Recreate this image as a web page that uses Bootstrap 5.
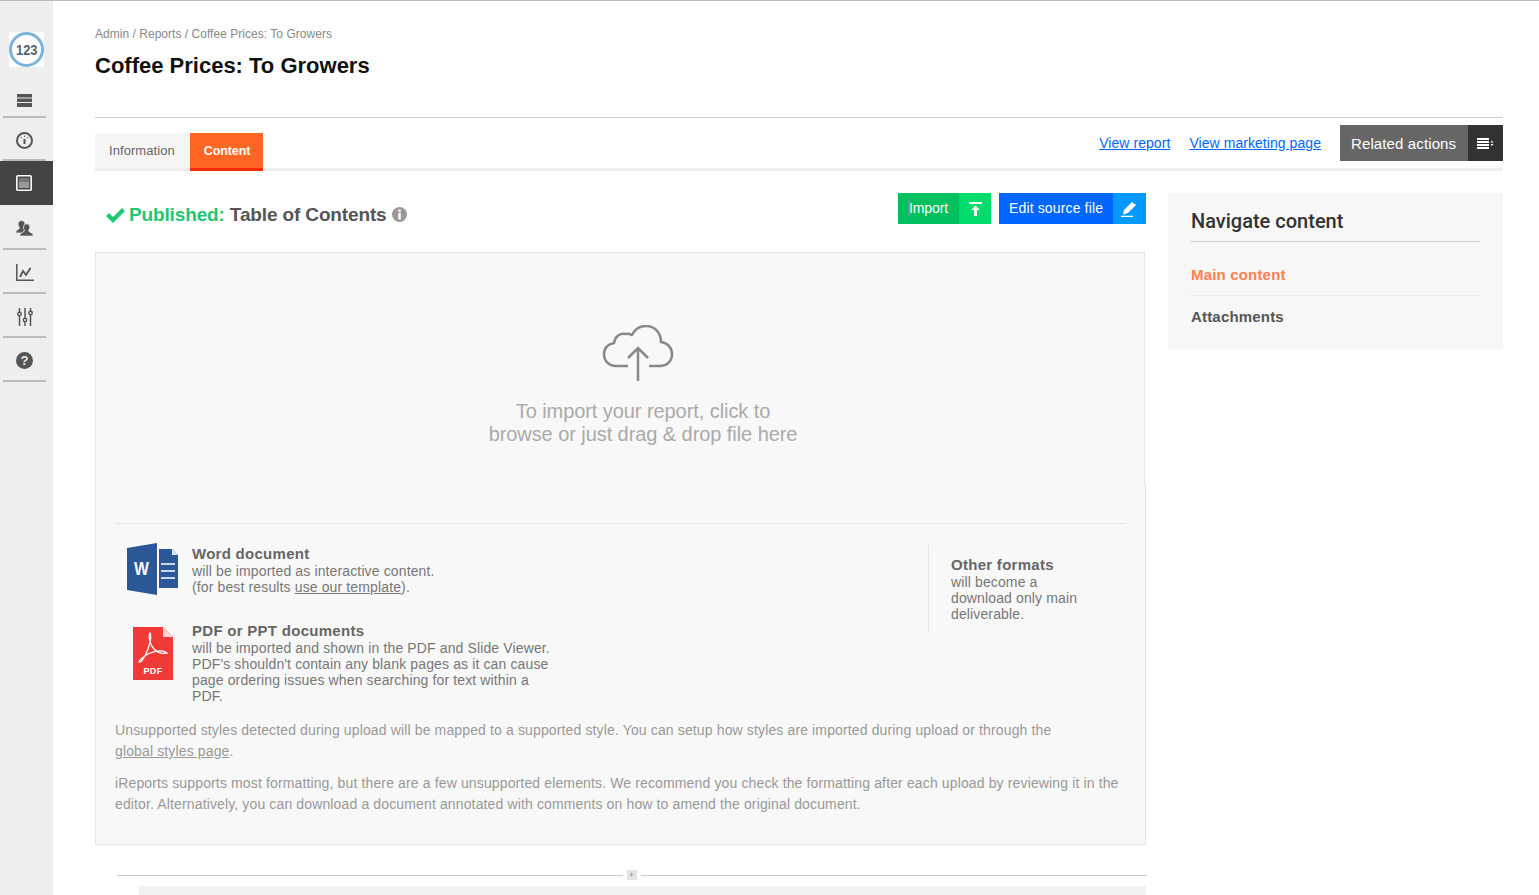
<!DOCTYPE html>
<html lang="en">
<head>
<meta charset="utf-8">
<title>Coffee Prices: To Growers</title>
<link href="https://cdn.jsdelivr.net/npm/bootstrap@5.3.0/dist/css/bootstrap.min.css" rel="stylesheet">
<style>
html,body{height:100%;overflow:hidden}
body{font-family:"Liberation Sans",Arial,sans-serif;font-size:14px;color:#777;background:#fff}
.shell{height:895px;border-top:1px solid #bbb}
.side{width:53px;flex:none;background:#eee}
.side-logo{height:78px;padding:31px 0 0 9px}
.side-item{height:44px;margin:0 7px 0 3px;padding-top:3px;border-bottom:2px solid #bbb;display:flex;align-items:center;justify-content:center;color:#555}
.side-item.i1{height:39px;padding-top:6px}
.side-item.i2{height:43px}
.side-active{height:44px;background:#444;display:flex;align-items:center;justify-content:center;padding-right:5px}
.side-item.i4{height:45px}
.main{flex:1;min-width:0;padding:0 36px 0 42px}
.crumb{font-size:12px;color:#888;line-height:14px;padding-top:26px;letter-spacing:.03px}
.ttl{font-size:22px;font-weight:700;color:#111;line-height:26px;margin:12px 0 0}
.rule1{height:1px;background:#ccc;margin-top:38px}
.tabbar{height:53px;border-bottom:3px solid #eee;align-items:flex-end}
.tb{height:35px;line-height:36px;font-size:13px;padding:0 15px 0 14px;background:#f5f5f5;color:#666;text-decoration:none;display:block;letter-spacing:.07px}
.tb.on{background:#ff6624;color:#fff;font-weight:700;font-size:12.5px;height:38px;padding:0 13px 0 14px;border-bottom:3px solid #ff2a00;margin-bottom:-3px;box-shadow:1px 0 0 #fff;letter-spacing:-.1px}
.tb-right{height:36px;margin-top:7px}
.lnk{color:#06f;font-size:14px;text-decoration:underline;margin-right:19px;line-height:16px;letter-spacing:.06px}
.rel{height:36px;display:flex;color:#fff;font-size:15px;line-height:38px;text-decoration:none;letter-spacing:.12px}
.rel b{font-weight:400;background:#666;padding:0 11px;width:128px}
.rel i{width:35px;background:#333;display:flex;align-items:center;justify-content:center}
.cols{margin-top:22px;gap:22px}
.left{width:1051px;flex:none}
.right{width:335px;flex:none;height:156px;background:#f7f7f7;padding:15px 23px 0 23px}
.pubrow{height:59px}
.pubhead{font-size:19px;font-weight:700;color:#555;padding:8px 0 0 11px;line-height:28px;letter-spacing:-.14px}
.pubhead span{color:#1ec774}
.infoi{vertical-align:-1px}
.actb{height:31px;display:flex;color:#fff;font-size:14px;line-height:30px;text-decoration:none;letter-spacing:-.1px}
.actb b{font-weight:400;padding:0 10px;white-space:nowrap}
.actb i{display:flex;align-items:center;justify-content:center;width:33px}
.gr b{background:#00c060;width:61px;position:relative;padding-left:11px}
.gr b::before{content:"";position:absolute;left:10px;top:7px;width:2px;height:16px;background:#5f9f7f}
.gr i{background:#00dc6c;width:32px}
.bl{margin-left:8px;letter-spacing:.14px}
.bl b{background:#06f;width:114px}
.bl i{background:#09f}
.zone{width:1050px;height:232px;background:#f8f8f8;border:1px solid #e5e5e5;border-bottom:0;text-align:center;color:#aaa;font-size:20px;line-height:23px;padding:72px 0 0 46px;letter-spacing:-.07px}
.zone svg{display:block;margin:0 0 18px 460px}
.zone p{margin:0}
.info{height:361px;background:#f8f8f8;border:1px solid #e5e5e5;border-top:0;padding:39px 19px 0 19px}
.sep{height:1px;background:#e8e8e8}
.docs{height:188px}
.doc{display:flex;line-height:16px;letter-spacing:.13px}
.doc h6,.other h6{font-size:15px;font-weight:700;color:#666;margin:0;line-height:18px;letter-spacing:.28px}
.doc-w{padding-top:21px}
.doc-p{padding-top:27px}
.ic{width:77px;flex:none}
.ic-w{display:block;margin:-2px 0 0 12px}
.ic-p{display:block;margin:5px 0 0 18px}
.ptext{width:362px}
.docl{width:813px;flex:none}
.other{width:198px;border-left:1px solid #e5e5e5;height:88px;margin-top:21px;padding:11px 0 0 22px;line-height:16px;letter-spacing:.13px}
.doc a,.info a{color:#777}
.note{color:#999;line-height:21px;margin:0 0 11px;letter-spacing:.135px}
.note-first{margin-top:8px}
.note a{color:#999}
.foot{height:20px;margin:20px 0 0 22px;gap:4px}
.foot em{flex:1;height:1px;background:#ccc}
.foot u{width:10px;height:10px;background:#e4e4e4;display:flex;align-items:center;justify-content:center;font-size:9px;line-height:10px;color:#999;text-decoration:none}
.grayblk{height:20px;background:#f2f2f2;margin:1px 0 0 44px}
.right h5{font-size:20px;font-weight:500;color:#333;line-height:26px;margin:0;padding-bottom:7px;border-bottom:1px solid #ccc;font-family:Roboto,"Liberation Sans",sans-serif}
.nv{display:block;font-size:15px;font-weight:700;text-decoration:none;line-height:20px;letter-spacing:.18px}
.nv.a{color:#ff7f50;padding:23px 0 10px;border-bottom:1px solid #eee}
.nv.b{color:#555;padding:11px 0 0}
</style>
</head>
<body>
<div class="shell d-flex">
  <nav class="side d-flex flex-column">
    <div class="side-logo">
      <svg width="35" height="35" viewBox="0 0 35 35"><rect width="35" height="35" fill="#fff"/><circle cx="17.5" cy="17.5" r="16" fill="#fff" stroke="#7ab3dc" stroke-width="3"/><text x="7" y="23" font-family="Liberation Sans,sans-serif" font-size="15" font-weight="700" fill="#55646f" textLength="21.500" lengthAdjust="spacingAndGlyphs">123</text></svg>
    </div>
    <div class="side-item i1"><svg width="15" height="13" viewBox="0 0 15 13" fill="#555"><rect width="15" height="3.500"/><rect y="4.500" width="15" height="3.500"/><rect y="9" width="15" height="4"/></svg></div>
    <div class="side-item i2"><svg width="17" height="17" viewBox="0 0 17 17" fill="none" stroke="#555"><circle cx="8.500" cy="8.500" r="7.500" stroke-width="2"/><path d="M8.500 7v5" stroke-width="2"/><path d="M8.500 3.500v1.500M5 5l.6 1.200M12 5l-.6 1.200" stroke-width="1"/></svg></div>
    <div class="side-active"><svg width="16" height="16" viewBox="0 0 16 16"><rect x=".8" y=".8" width="14.400" height="14.400" rx="1" fill="#444" stroke="#fff" stroke-width="1.600"/><rect x="2.800" y="3" width="10.400" height="4" fill="#777"/><rect x="2.800" y="7" width="10.400" height="6" fill="#999"/></svg></div>
    <div class="side-item i4"><svg width="17" height="16" viewBox="0 0 17 16" fill="#555" stroke="#eee" stroke-width=".7"><path d="M2 4a3.500 3.500 0 1 1 7 0c0 1.200-.5 2.400-1.200 3.200v1.300L10 10l-4 3H0v-2l3.300-2.500V7.200C2.500 6.400 2 5.200 2 4z"/><path d="M7.500 7a3.200 3.200 0 1 1 6.400 0c0 1.400-.5 2.400-1.200 3.100v1.100L17 14v2H4v-2l4.300-2.800v-1.100C7.800 9.400 7.500 8.400 7.500 7z"/></svg></div>
    <div class="side-item"><svg width="18" height="17" viewBox="0 0 18 17" fill="none" stroke="#555"><path d="M.8 0v16.200H18" stroke-width="1.500"/><path d="M4 13l3-6 3 4 4.500-7" stroke-width="1.800"/></svg></div>
    <div class="side-item"><svg width="16" height="18" viewBox="0 0 16 18" fill="#eee" stroke="#555" stroke-width="1.500"><path d="M2.500 0v18M8 0v18M13.500 0v18"/><circle cx="2.500" cy="6" r="1.700"/><circle cx="8" cy="12" r="1.700"/><circle cx="13.500" cy="5" r="1.700"/></svg></div>
    <div class="side-item"><svg width="17" height="17" viewBox="0 0 17 17"><circle cx="8.500" cy="8.500" r="8.500" fill="#555"/><text x="8.500" y="13" text-anchor="middle" font-family="Liberation Sans,sans-serif" font-size="13" font-weight="700" fill="#eee">?</text></svg></div>
  </nav>
  <main class="main">
    <div class="crumb">Admin / Reports / Coffee Prices: To Growers</div>
    <h1 class="ttl">Coffee Prices: To Growers</h1>
    <div class="rule1"></div>
    <div class="tabbar d-flex">
      <a class="tb" href="#">Information</a>
      <a class="tb on" href="#">Content</a>
      <div class="tb-right ms-auto d-flex align-items-center align-self-start">
        <a class="lnk" href="#">View report</a>
        <a class="lnk" href="#">View marketing page</a>
        <a class="rel" href="#"><b>Related actions</b><i><svg width="17" height="11" viewBox="0 0 17 11" fill="#fff"><rect width="12" height="2"/><rect y="3" width="12" height="2"/><rect y="6" width="12" height="2"/><rect y="9" width="12" height="2"/><path d="M13.500 4.500l1.500-2 1.500 2zM13.500 6l1.500 2 1.500-2z"/></svg></i></a>
      </div>
    </div>
    <div class="cols d-flex">
      <div class="left">
        <div class="pubrow d-flex justify-content-between">
          <div class="pubhead"><svg width="19" height="15" viewBox="0 0 19 15" fill="#1ec774" class="me-1"><path d="M0 8l3-3 4 4 9-9 3 3L7 15z"/></svg><span>Published:</span> Table of Contents <svg class="infoi" width="15" height="15" viewBox="0 0 15 15"><circle cx="7.500" cy="7.500" r="7.500" fill="#999"/><rect x="6.300" y="2.500" width="2.500" height="2.400" fill="#fff"/><rect x="6.300" y="6" width="2.500" height="6.500" fill="#fff"/></svg></div>
          <div class="d-flex">
            <a class="actb gr" href="#"><b>Import</b><i><svg width="13" height="14" viewBox="0 0 13 14" fill="#fff"><rect width="13" height="2"/><path d="M6.500 3.500L11 8H8v6H5V8H2z"/></svg></i></a>
            <a class="actb bl" href="#"><b>Edit source file</b><i><svg width="17" height="16" viewBox="0 0 17 16" fill="#fff"><path d="M3 9L11 1l4 3-8 8-5 1.500z"/><rect y="14.700" width="12" height="1.300"/></svg></i></a>
          </div>
        </div>
        <div class="zone">
          <svg width="72" height="57" viewBox="0 0 72 57" fill="none" stroke="#888" stroke-width="2.500"><path d="M26 41H14C7 41 2 36 2 29c0-6 4-10 10-11 1-7 6-10 12-9 4-1 5 1 6 1 3-6 8-9 14-9 9 0 15 7 15 16 7 1 11 6 11 12 0 7-5 12-12 12H47"/><path d="M36 56V24M26 33l10-10 10 10"/></svg>
          <p>To import your report, click to<br>browse or just drag &amp; drop file here</p>
        </div>
        <div class="info">
          <div class="sep"></div>
          <div class="docs d-flex">
            <div class="docl">
              <div class="doc doc-w">
                <div class="ic"><svg class="ic-w" width="52" height="52" viewBox="0 0 52 52"><path d="M0 5L30 0v52L0 47z" fill="#2b5797"/><path d="M32 6h13l6 6v33H32z" fill="#2b5797"/><path d="M45 6l6 6h-6z" fill="#dfe7f2"/><path d="M34 21h14M34 28h14M34 35h14" stroke="#fff" stroke-width="1.500"/><text x="7" y="32" font-family="Liberation Sans,sans-serif" font-size="18" font-weight="700" fill="#fff" textLength="15" lengthAdjust="spacingAndGlyphs">W</text></svg></div>
                <div><h6>Word document</h6>will be imported as interactive content.<br>(for best results <a href="#">use our template</a>).</div>
              </div>
              <div class="doc doc-p">
                <div class="ic"><svg class="ic-p" width="40" height="53" viewBox="0 0 40 53"><path d="M0 0h30l10 10v43H0z" fill="#f03a37"/><path d="M30 0l10 10H30z" fill="#fbd6d5"/><path d="M17 6C15 9 17 18 21 22C25 26 30 27 34 26C30 23 22 24 15 27C10 30 6 33 6 35C8 36 12 30 15 22C17 16 19 9 17 6Z" fill="none" stroke="#fff" stroke-width="1.300"/><text x="20" y="47" text-anchor="middle" font-family="Liberation Sans,sans-serif" font-size="9" font-weight="700" fill="#fff" letter-spacing=".4">PDF</text></svg></div>
                <div class="ptext"><h6>PDF or PPT documents</h6>will be imported and shown in the PDF and Slide Viewer. PDF's shouldn't contain any blank pages as it can cause page ordering issues when searching for text within a PDF.</div>
              </div>
            </div>
            <div class="other"><h6>Other formats</h6>will become a<br>download only main<br>deliverable.</div>
          </div>
          <p class="note note-first">Unsupported styles detected during upload will be mapped to a supported style. You can setup how styles are imported during upload or through the <a class="text-nowrap" href="#">global styles page</a>.</p>
          <p class="note">iReports supports most formatting, but there are a few unsupported elements. We recommend you check the formatting after each upload by reviewing it in the editor. Alternatively, you can download a document annotated with comments on how to amend the original document.</p>
        </div>
        <div class="foot d-flex align-items-center"><em></em><u>+</u><em></em></div>
        <div class="grayblk"></div>
      </div>
      <aside class="right">
        <h5>Navigate content</h5>
        <a class="nv a" href="#">Main content</a>
        <a class="nv b" href="#">Attachments</a>
      </aside>
    </div>
  </main>
</div>
<script src="https://cdn.jsdelivr.net/npm/bootstrap@5.3.0/dist/js/bootstrap.bundle.min.js"></script>
</body>
</html>
